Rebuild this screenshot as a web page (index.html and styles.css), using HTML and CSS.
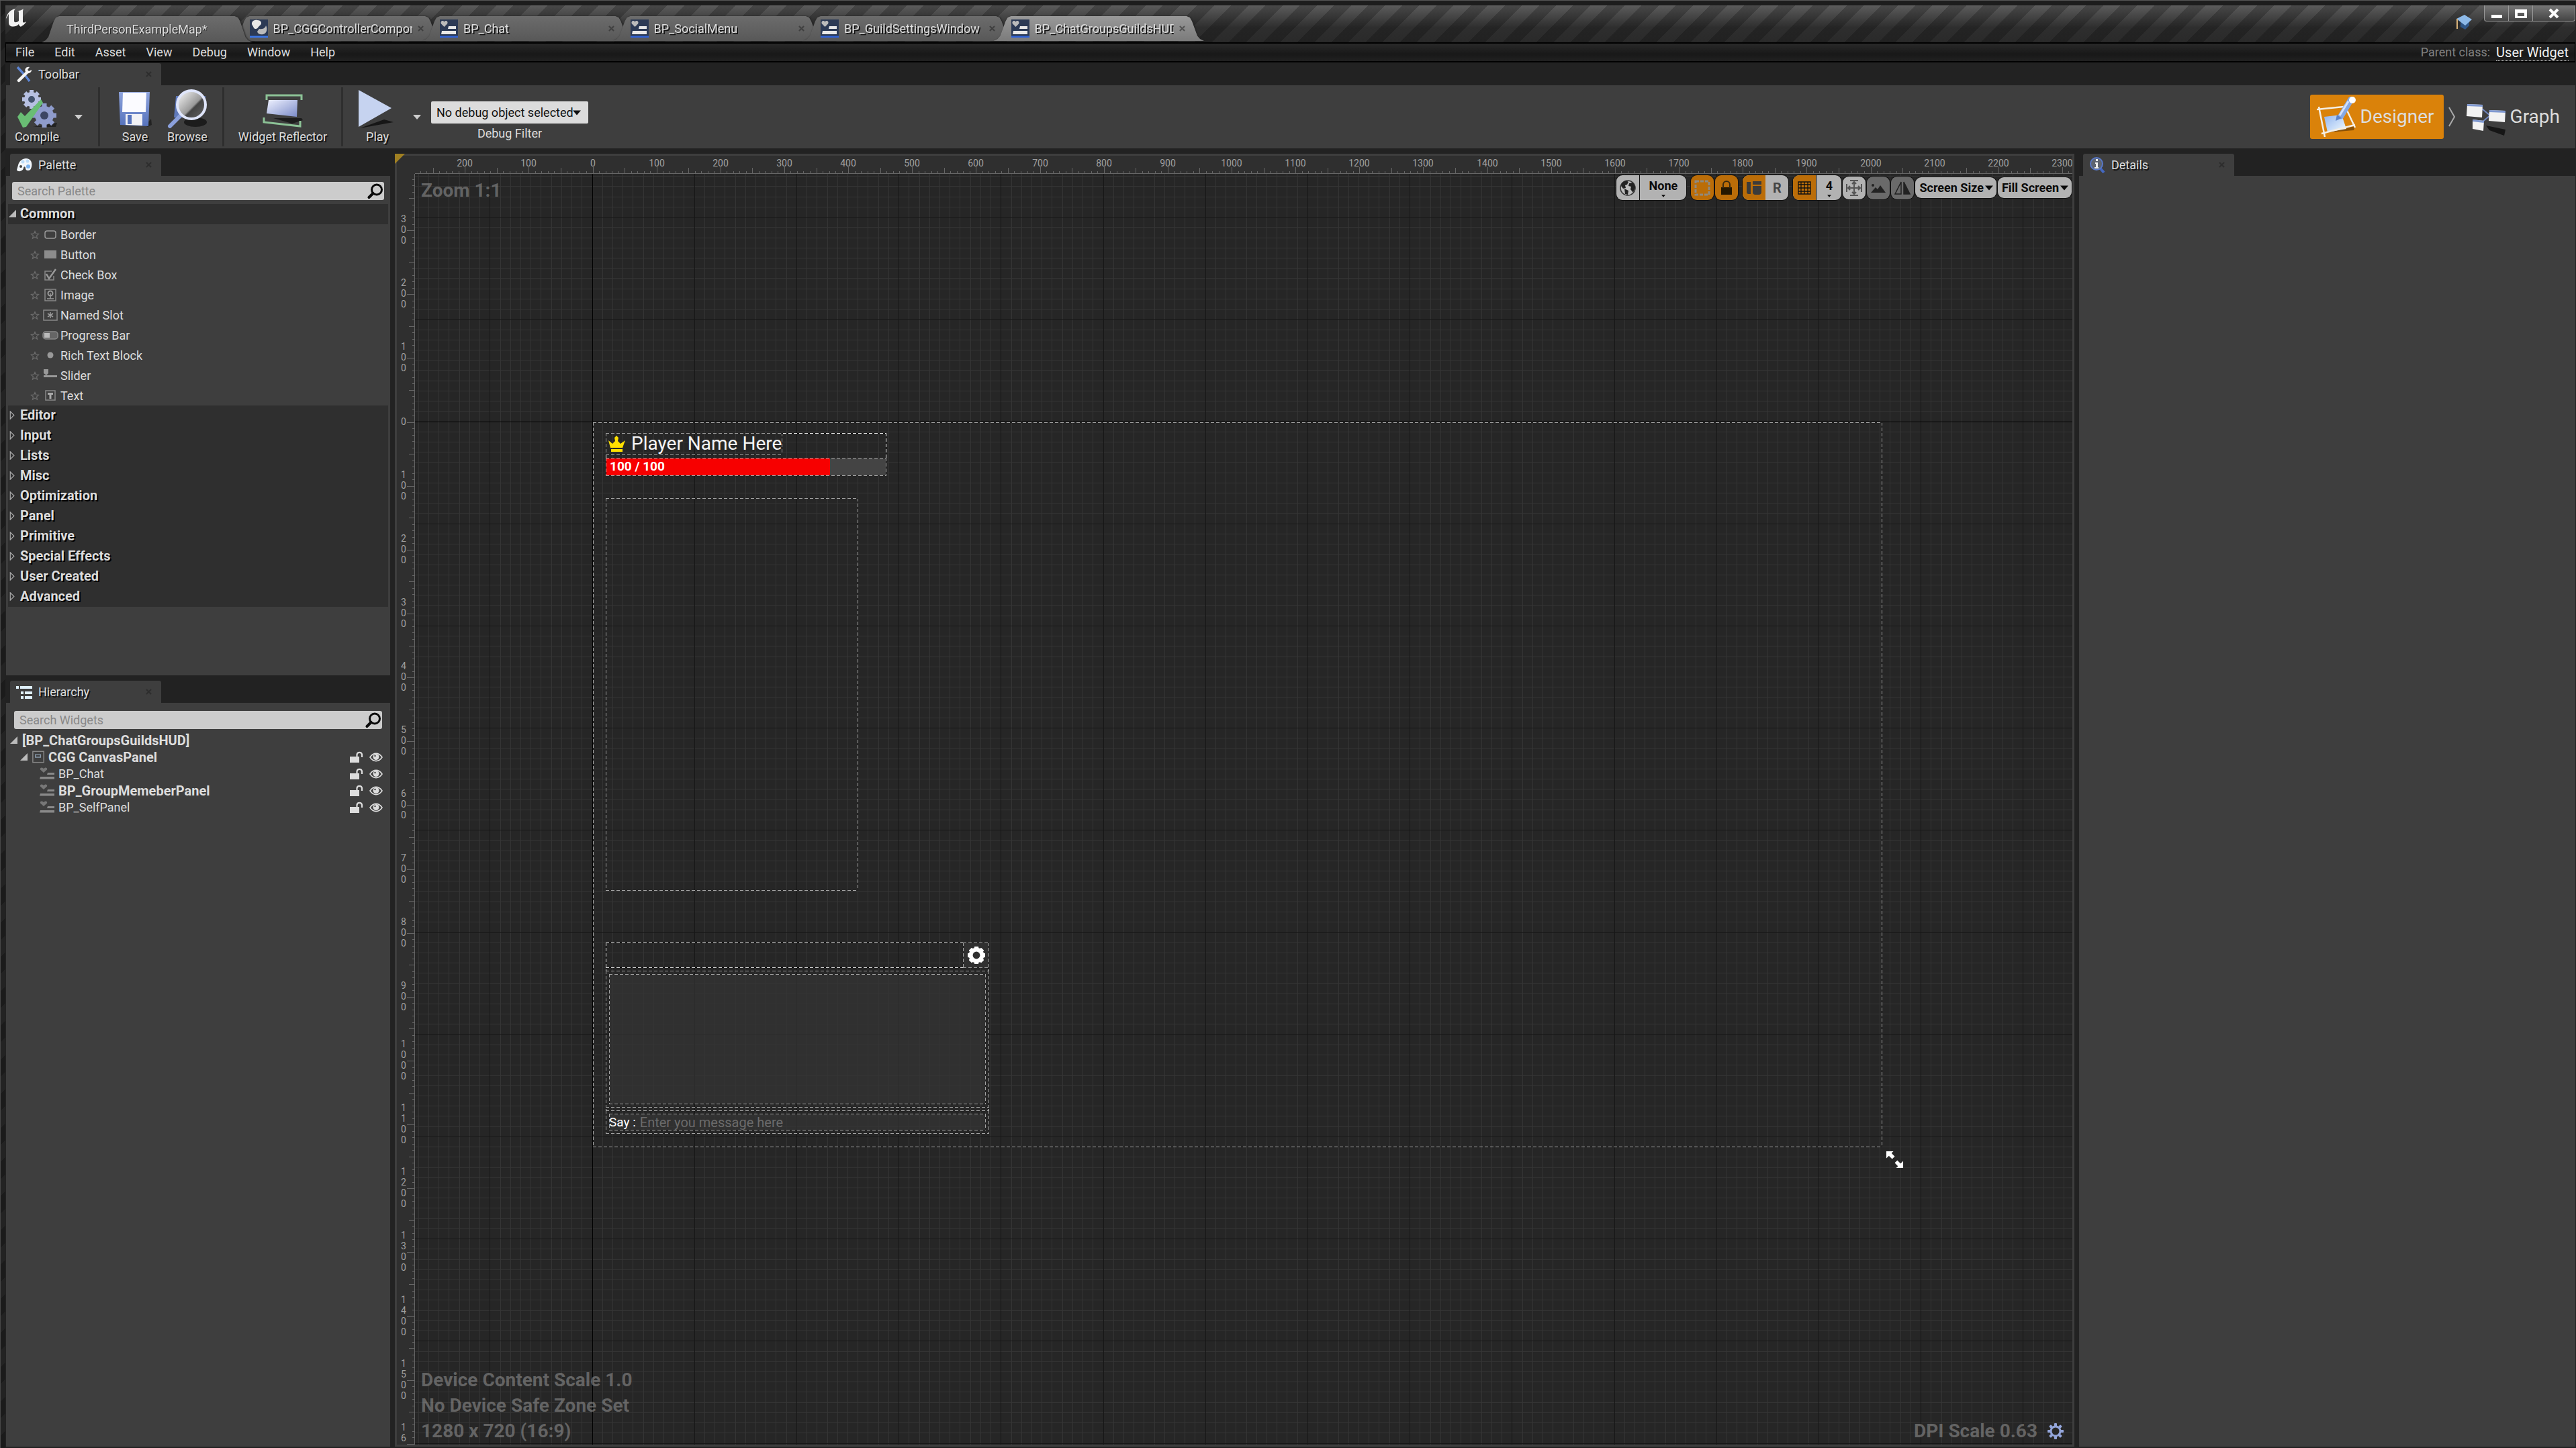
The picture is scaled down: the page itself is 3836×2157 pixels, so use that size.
FILE: index.html
```html
<!DOCTYPE html>
<html lang="en">
<head>
<meta charset="utf-8">
<title>BP_ChatGroupsGuildsHUD</title>
<link rel="stylesheet" href="styles.css">
</head>
<body>
<svg class="defs" aria-hidden="true">
  <defs>
    <linearGradient id="blue" x1="0" y1="0" x2="1" y2="1"><stop offset="0" stop-color="#eef1ff"/><stop offset="1" stop-color="#7b8bc8"/></linearGradient>
    <linearGradient id="steel" x1="0" y1="0" x2="0" y2="1"><stop offset="0" stop-color="#8ea3dc"/><stop offset="1" stop-color="#5673bd"/></linearGradient>
    <linearGradient id="lens" x1="0" y1="0" x2="1" y2="1"><stop offset="0" stop-color="#fff"/><stop offset=".55" stop-color="#999"/><stop offset=".6" stop-color="#444"/><stop offset="1" stop-color="#666"/></linearGradient>
    <linearGradient id="shine" x1="0" y1="0" x2="1" y2="1"><stop offset="0" stop-color="#8fb4f0"/><stop offset="1" stop-color="#f4fcff"/></linearGradient>
  </defs>
  <symbol id="i-widget" viewBox="0 0 27 27"><rect width="27" height="27" fill="#2c3a55"/><path d="M6.500 11 2 6.500C0 3 4 0 6.500 3.500 9 0 13 3 11 6.500z" fill="#bbb"/><path d="M13 10h11v4H12zM3 17h21v5H2z" fill="#e8e8e8"/><path d="M0 24.500h27V27H0z" fill="#2f62d8"/></symbol>
  <symbol id="i-widget-dim" viewBox="0 0 23 19"><path d="M6 8 1 3.500C0 0 4-.5 6 2c2-2.500 6-2 5 1.500z" fill="#777"/><path d="M12 8h10v3H11zM1 14h21v3.500H0z" fill="#8a8a8a"/></symbol>
  <symbol id="i-star" viewBox="0 0 14 14"><path d="M7 1.500 8.600 5.200 12.600 5.500 9.500 8.100 10.500 12.200 7 10 3.500 12.200 4.500 8.100 1.400 5.500 5.400 5.200z" fill="none" stroke="#6c6c6c" stroke-width="1.200"/></symbol>
  <symbol id="i-search" viewBox="0 0 24 24"><circle cx="14" cy="9.500" r="7.500" fill="none" stroke="#0a0a0a" stroke-width="3"/><path d="m8.500 15-6 6" stroke="#0a0a0a" stroke-width="4" stroke-linecap="round"/></symbol>
  <symbol id="i-open" viewBox="0 0 12 12"><path d="M11 0v11H0z" fill="#bbb"/></symbol>
  <symbol id="i-closed" viewBox="0 0 12 14"><path d="M2 1v12l6-6z" fill="none" stroke="#aaa" stroke-width="1.300"/></symbol>
  <symbol id="i-x" viewBox="0 0 10 10"><path d="m1 1 8 8M9 1 1 9" stroke="#1e1e1e" stroke-width="2.400"/></symbol>
  <symbol id="i-lock" viewBox="0 0 20 18"><path d="M0 8h14v9H0z" fill="#ddd"/><path d="M10.500 8V5a3.800 3.800 0 0 1 7.500 0v4" fill="none" stroke="#ddd" stroke-width="2.200"/></symbol>
  <symbol id="i-eye" viewBox="0 0 20 14"><path d="M1 7c5-7.500 13-7.500 18 0-5 7.500-13 7.500-18 0z" fill="none" stroke="#ddd" stroke-width="1.600"/><circle cx="10" cy="6.500" r="4.500" fill="#ddd"/><circle cx="8.500" cy="5" r="1.200" fill="#3e3e3e"/></symbol>
  <symbol id="i-down" viewBox="0 0 12 7"><path d="M0 0h12L6 7z" fill="currentColor"/></symbol>
  <symbol id="i-gear" viewBox="-12 -12 24 24"><g fill="currentColor"><rect x="-2" y="-12" width="4" height="24" rx="1"/><rect x="-2" y="-12" width="4" height="24" rx="1" transform="rotate(45)"/><rect x="-2" y="-12" width="4" height="24" rx="1" transform="rotate(90)"/><rect x="-2" y="-12" width="4" height="24" rx="1" transform="rotate(135)"/><circle r="8.500"/></g><circle r="5.500" fill="#262626"/></symbol>
</svg>

<div class="window">
  <header class="titlebar">
    <svg class="logo" viewBox="0 0 36 30"><path d="M1 16C2 8 8 2 15 1c-2 2-2 3-2 5v13c0 3 4 3 7 0V7c0-3-1-2-3-2 3-1 8-2 10-4-1 2-1 4-1 6v13c0 2 2 2 5 0-2 5-6 6-8 8-1-1-3-2-3-4-4 4-8 4-12 3-2-1-3-3-3-5V9C4 10 3 13 1 16z" fill="#f2f2f2"/></svg>
    <nav class="tabs">
      <a class="tab first" href="#"><span class="tab-label">ThirdPersonExampleMap*</span></a>
      <a class="tab" href="#"><svg class="tab-icon" viewBox="0 0 27 27"><rect width="27" height="27" fill="#2c3a55"/><path d="M4 9c-3-4 1-9 7-8 6 0 8 5 4 8-3 2-3 5-6 5s-3-2-5-5z" fill="#e8e8e8"/><path d="M14 14c7 1 9-2 10-5 3 5 1 12-4 13-4 1-8 0-9-4z" fill="#bbb"/><path d="M0 24.500h27V27H0z" fill="#3b78ee"/></svg><span class="tab-label">BP_CGGControllerComponent</span><svg class="close"><use href="#i-x"/></svg></a>
      <a class="tab" href="#"><svg class="tab-icon"><use href="#i-widget"/></svg><span class="tab-label">BP_Chat</span><svg class="close"><use href="#i-x"/></svg></a>
      <a class="tab" href="#"><svg class="tab-icon"><use href="#i-widget"/></svg><span class="tab-label">BP_SocialMenu</span><svg class="close"><use href="#i-x"/></svg></a>
      <a class="tab" href="#"><svg class="tab-icon"><use href="#i-widget"/></svg><span class="tab-label">BP_GuildSettingsWindow</span><svg class="close"><use href="#i-x"/></svg></a>
      <a class="tab active" href="#"><svg class="tab-icon"><use href="#i-widget"/></svg><span class="tab-label">BP_ChatGroupsGuildsHUD</span><svg class="close"><use href="#i-x"/></svg></a>
    </nav>
    <svg class="cap" viewBox="0 0 26 24"><path d="M7 9v9l7 4 6-6V8z" fill="#2f5687"/><path d="M1 6 13 0l11 7-10 9z" fill="#8db9e8"/><path d="M2 6v15" stroke="#d8b27a" stroke-width="2"/></svg>
    <div class="controls">
      <button aria-label="Minimize"><svg viewBox="0 0 18 16"><path d="M1 10h16v5H1z" fill="#fff"/></svg></button>
      <button aria-label="Maximize"><svg viewBox="0 0 18 16"><path d="M0 2h18v13H0zM4 7v5h10V7z" fill="#fff" fill-rule="evenodd"/></svg></button>
      <button class="wide" aria-label="Close"><svg viewBox="0 0 18 16"><path d="m3 2 12 12M15 2 3 14" stroke="#fff" stroke-width="4"/></svg></button>
    </div>
  </header>

  <nav class="menubar">
    <button>File</button><button>Edit</button><button>Asset</button><button>View</button><button>Debug</button><button>Window</button><button>Help</button>
    <span class="parent">Parent class:</span><a class="class-link" href="#">User Widget</a>
  </nav>

  <section class="dock">
    <div class="dock-tabs"><div class="dock-tab"><svg class="dock-icon" viewBox="0 0 24 24"><path d="m2 1 12 13 6 8" stroke="#5d86d6" stroke-width="3.500" fill="none"/><path d="m4 21 12-12" stroke="#f4f4f4" stroke-width="4.500" stroke-linecap="round"/><path d="M20 1c-5-1-8 3-6 7 3 4 9 2 9-3l-4 2-2-2z" fill="#f4f4f4"/></svg><h2>Toolbar</h2><svg class="close"><use href="#i-x"/></svg></div></div>
    <div class="toolbar">
      <button class="tool compile"><svg viewBox="0 0 60 58"><path d="M24 56 60 50l-2 6z" fill="#222"/><g transform="translate(22 15)" fill="#b7c0e2"><rect x="-3" y="-14" width="6" height="28"/><rect x="-3" y="-14" width="6" height="28" transform="rotate(45)"/><rect x="-3" y="-14" width="6" height="28" transform="rotate(90)"/><rect x="-3" y="-14" width="6" height="28" transform="rotate(135)"/><circle r="11"/><circle r="5" fill="#44536e"/></g><g transform="translate(41 39)" fill="#8f9ccc"><rect x="-3.500" y="-18" width="7" height="36"/><rect x="-3.500" y="-18" width="7" height="36" transform="rotate(45)"/><rect x="-3.500" y="-18" width="7" height="36" transform="rotate(90)"/><rect x="-3.500" y="-18" width="7" height="36" transform="rotate(135)"/><circle r="14"/><circle r="6" fill="#3c4663"/></g><path d="m1 41 5-7 6 6L36 15l3 5-25 36-5 1z" fill="#69bd74"/></svg>Compile</button>
      <button class="drop compile-drop" aria-label="Compile options"><svg><use href="#i-down"/></svg></button>
      <i class="sep"></i>
      <button class="tool save"><svg viewBox="0 0 60 58"><path d="m45 54 9-10 1 9-6 3z" fill="#222"/><path d="M6 4h46l-2 51-42-2z" fill="url(#steel)"/><path d="M12 5h35l-1 29H11z" fill="#fbfbff"/><path d="M16 37h25v17l-25-1z" fill="#f2f2f6"/><path d="M19 38h6v14h-6z" fill="#5673bd"/></svg>Save</button>
      <button class="tool browse"><svg viewBox="0 0 60 58"><ellipse cx="42" cy="49" rx="17" ry="7" fill="#1c1c1c"/><path d="M13 10h44v20L48 42H10z" fill="#5f79bb"/><path d="m4 55 17-17" stroke="#8ba0dc" stroke-width="6" stroke-linecap="round"/><circle cx="36" cy="23" r="21" fill="url(#lens)" stroke="#dfe5fa" stroke-width="4"/></svg>Browse</button>
      <i class="sep"></i>
      <button class="tool reflector"><svg viewBox="0 0 60 58"><path d="M16 43h42l2 3-16 5z" fill="#1c1c1c"/><path d="M9 16h43l-1 25-45-5z" fill="url(#blue)"/><path d="M6 16V9h52v7M2 42v7l54 6v-8" fill="none" stroke="#8cc296" stroke-width="3"/></svg>Widget Reflector</button>
      <i class="sep"></i>
      <button class="tool play"><svg viewBox="0 0 60 58"><path d="m4 58 50-9-14-4z" fill="#161616"/><path d="M2 1v55l49-28z" fill="#c6d3f0"/></svg>Play</button>
      <button class="drop play-drop" aria-label="Play options"><svg><use href="#i-down"/></svg></button>
      <div class="debug">
        <div class="select-box"><select id="debug"><option>No debug object selected</option></select><svg><use href="#i-down"/></svg></div>
        <label for="debug">Debug Filter</label>
      </div>
      <div class="modes">
        <button class="mode on"><svg viewBox="0 0 60 60"><path d="M10 54 58 44 56 50z" fill="#8a5207"/><path d="m12 30 26-3 7 21-28 5z" fill="url(#shine)"/><path d="m1 19 40-4M4 15l9 45M8 55l50-13M42 12l16 34" stroke="#f4eee4" stroke-width="2.500" fill="none"/><path d="m37 29 15-25" stroke="#86a9e4" stroke-width="9" stroke-linecap="round"/><path d="m35 28 13-21" stroke="#d4e2fa" stroke-width="3"/><circle cx="54" cy="5" r="5" fill="#fff"/><path d="m31 27-2 9 9-4z" fill="#5a83cc"/></svg>Designer</button>
        <svg class="chevron" viewBox="0 0 12 30"><path d="m2 1 8 14-8 14" fill="none" stroke="#aaa" stroke-width="2"/></svg>
        <button class="mode"><svg viewBox="0 0 60 60"><path d="m30 43 29 6-2 9-22-8z" fill="#161616"/><path d="m24 18 12 10-12 10" fill="none" stroke="#7188c2" stroke-width="2"/><path d="m2 11 23 1-1 19-23-2zM35 20l24 1-1 17-24-2zM10 34l17 2-1 15-16-3z" fill="#f2f2f2"/><path d="m2 11 23 1v3L2 14zM35 20l24 1v3l-24-1zM10 34l17 2v3l-17-2z" fill="#8099d0"/></svg>Graph</button>
      </div>
    </div>
  </section>

  <main class="workspace">
    <aside class="left">
      <section class="dock palette">
        <div class="dock-tabs"><div class="dock-tab"><svg class="dock-icon" viewBox="0 0 24 24"><path d="M3 12C5 4 13 0 19 3c6 3 5 12 2 16-3 2-7 1-7-2s-2-4-3-1c0 5-9 7-10 3z" fill="#f2f6fb"/><circle cx="18" cy="14" r="3" fill="#79b2ee"/><circle cx="10" cy="7" r="2.500" fill="#bcdcf8"/><circle cx="17" cy="6" r="2.500" fill="#bcdcf8"/><circle cx="7" cy="14" r="2" fill="#444"/></svg><h2>Palette</h2><svg class="close"><use href="#i-x"/></svg></div></div>
        <div class="panel">
          <div class="search"><input type="search" placeholder="Search Palette" aria-label="Search Palette"><svg><use href="#i-search"/></svg></div>
          <div class="tree">
            <button class="category"><svg><use href="#i-open"/></svg>Common</button>
            <ul>
              <li><svg class="star"><use href="#i-star"/></svg><svg class="kind" viewBox="0 0 24 20"><rect x="4" y="4" width="16" height="11" rx="3" fill="none" stroke="#999" stroke-width="1.500"/></svg>Border</li>
              <li><svg class="star"><use href="#i-star"/></svg><svg class="kind" viewBox="0 0 24 20"><rect x="3" y="3" width="18" height="12" fill="#8c8c8c"/></svg>Button</li>
              <li><svg class="star"><use href="#i-star"/></svg><svg class="kind" viewBox="0 0 24 20"><path d="M14 4H4v13h13v-6" fill="none" stroke="#888" stroke-width="1.500"/><path d="m6 8 4 7L20 1" fill="none" stroke="#999" stroke-width="2.500"/></svg>Check Box</li>
              <li><svg class="star"><use href="#i-star"/></svg><svg class="kind" viewBox="0 0 24 20"><rect x="4" y="1" width="16" height="17" fill="none" stroke="#888" stroke-width="1.500"/><path d="M12 7v8M7 15h10" stroke="#999" stroke-width="1.500"/><circle cx="12" cy="7" r="3.500" fill="none" stroke="#999" stroke-width="2"/></svg>Image</li>
              <li><svg class="star"><use href="#i-star"/></svg><svg class="kind" viewBox="0 0 24 20"><rect x="2" y="2" width="20" height="15" fill="none" stroke="#888" stroke-width="1.500"/><path d="M12 5v9M8 7l8 5M16 7l-8 5" stroke="#999" stroke-width="1.500"/></svg>Named Slot</li>
              <li><svg class="star"><use href="#i-star"/></svg><svg class="kind" viewBox="0 0 24 20"><rect x="1" y="4" width="22" height="11" rx="4" fill="#666" stroke="#888" stroke-width="1.500"/><rect x="3" y="6" width="8" height="7" fill="#bbb"/></svg>Progress Bar</li>
              <li><svg class="star"><use href="#i-star"/></svg><svg class="kind" viewBox="0 0 24 20"><circle cx="12" cy="9" r="4.500" fill="#999"/></svg>Rich Text Block</li>
              <li><svg class="star"><use href="#i-star"/></svg><svg class="kind" viewBox="0 0 24 20"><path d="M2 0h7v6L6 9 2 6zM2 9h20v3H2z" fill="#999"/></svg>Slider</li>
              <li><svg class="star"><use href="#i-star"/></svg><svg class="kind" viewBox="0 0 24 20"><rect x="5" y="2" width="14" height="14" fill="none" stroke="#888" stroke-width="1.500"/><path d="M8 5h8v3h-2.500v6h-3V8H8z" fill="#aaa"/></svg>Text</li>
            </ul>
            <button class="category"><svg><use href="#i-closed"/></svg>Editor</button>
            <button class="category"><svg><use href="#i-closed"/></svg>Input</button>
            <button class="category"><svg><use href="#i-closed"/></svg>Lists</button>
            <button class="category"><svg><use href="#i-closed"/></svg>Misc</button>
            <button class="category"><svg><use href="#i-closed"/></svg>Optimization</button>
            <button class="category"><svg><use href="#i-closed"/></svg>Panel</button>
            <button class="category"><svg><use href="#i-closed"/></svg>Primitive</button>
            <button class="category"><svg><use href="#i-closed"/></svg>Special Effects</button>
            <button class="category"><svg><use href="#i-closed"/></svg>User Created</button>
            <button class="category"><svg><use href="#i-closed"/></svg>Advanced</button>
          </div>
        </div>
      </section>
      <section class="dock hierarchy">
        <div class="dock-tabs"><div class="dock-tab"><svg class="dock-icon" viewBox="0 0 24 24"><path d="M0 3h4v4H0zM6 3h18v4H6zM7 11h4v4H7zM13 11h11v4H13zM7 18h4v4H7zM13 18h11v4H13z" fill="#dff0fb"/></svg><h2>Hierarchy</h2><svg class="close"><use href="#i-x"/></svg></div></div>
        <div class="panel">
          <div class="search inset"><input type="search" placeholder="Search Widgets" aria-label="Search Widgets"><svg><use href="#i-search"/></svg></div>
          <ul class="nodes">
            <li class="strong"><svg class="twist"><use href="#i-open"/></svg><span>[BP_ChatGroupsGuildsHUD]</span></li>
            <li class="strong level-1"><svg class="twist"><use href="#i-open"/></svg><svg class="node-icon" viewBox="0 0 24 19"><rect x="3" y="1" width="17" height="17" fill="none" stroke="#888" stroke-width="1.500"/><path d="M7 6h8v4H7z" fill="none" stroke="#89a" stroke-width="1.500"/></svg><span>CGG CanvasPanel</span><svg class="lock"><use href="#i-lock"/></svg><svg class="eye"><use href="#i-eye"/></svg></li>
            <li class="level-2"><svg class="node-icon"><use href="#i-widget-dim"/></svg><span>BP_Chat</span><svg class="lock"><use href="#i-lock"/></svg><svg class="eye"><use href="#i-eye"/></svg></li>
            <li class="strong level-2"><svg class="node-icon"><use href="#i-widget-dim"/></svg><span>BP_GroupMemeberPanel</span><svg class="lock"><use href="#i-lock"/></svg><svg class="eye"><use href="#i-eye"/></svg></li>
            <li class="level-2"><svg class="node-icon"><use href="#i-widget-dim"/></svg><span>BP_SelfPanel</span><svg class="lock"><use href="#i-lock"/></svg><svg class="eye"><use href="#i-eye"/></svg></li>
          </ul>
        </div>
      </section>
    </aside>

    <section class="designer">
      <div class="corner"></div>
      <svg class="ruler ruler-x" id="ruler-x"></svg>
      <svg class="ruler ruler-y" id="ruler-y"></svg>
      <div class="surface">
        <svg class="grid" id="grid"></svg>
        <div class="frame outline dim"></div>
        <div class="self-panel outline">
          <div class="name-row outline dim"><svg viewBox="0 0 27 24"><path d="M4 18 1 7l6 5 4-4-1-5 3-3 3 3-1 5 4 4 7-5-4 11zM5 20h17v4H5z" fill="#ffe000"/></svg><span>Player Name Here</span></div>
          <div class="health outline dim"><span class="health-fill">100 / 100</span></div>
        </div>
        <div class="group-panel outline dim"></div>
        <div class="chat outline">
          <div class="chat-head outline dim"><button class="outline dim" aria-label="Settings"><svg viewBox="-12 -12 24 24"><g fill="#fff"><rect x="-3" y="-12" width="6" height="24" rx="1"/><rect x="-3" y="-12" width="6" height="24" rx="1" transform="rotate(45)"/><rect x="-3" y="-12" width="6" height="24" rx="1" transform="rotate(90)"/><rect x="-3" y="-12" width="6" height="24" rx="1" transform="rotate(135)"/><circle r="10.500"/></g><circle r="5" fill="#303030"/></svg></button></div>
          <div class="chat-log outline dim"><div class="outline dim fill"></div></div>
          <div class="chat-entry outline dim"><div class="outline dim fill"><label for="say">Say :</label><input id="say" placeholder="Enter you message here"></div></div>
        </div>
        <svg class="resize" viewBox="0 0 28 28"><path d="M1 1h11L9 4l5 5-4 4-5-5-4 4zM27 27H16l3-3-5-5 4-4 5 5 4-4z" fill="#fff"/></svg>
        <div class="zoom">Zoom 1:1</div>
        <div class="view-tools">
          <div class="group"><button aria-label="Localization"><svg viewBox="0 0 24 24"><circle cx="12" cy="12" r="11" fill="#bdbdbd" stroke="#333" stroke-width="1.500"/><path d="M3 5c3-4 8-4 10-2l-2 4-3 1 1 4-4 1-3-4zM14 5l6-1 3 7-3 8-4-5 1-4-4-1zM7 13l6 3-1 6-4-1z" fill="#222"/></svg></button><button class="menu none">None<svg><use href="#i-down"/></svg></button></div>
          <div class="group on gap"><button aria-label="Outlines"><svg viewBox="0 0 24 24"><rect x="2" y="2" width="20" height="20" fill="none" stroke="#8f8a80" stroke-width="3" stroke-dasharray="5 2"/></svg></button></div>
          <div class="group on"><button aria-label="Locks"><svg viewBox="0 0 24 24"><path d="M4 11h16v11H4z" fill="#261800"/><path d="M7 12V7a5 5 0 0 1 10 0v5" fill="none" stroke="#3a2a10" stroke-width="2"/></svg></button></div>
          <div class="group gap"><button class="on" aria-label="Flow"><svg viewBox="0 0 24 24"><path d="M1 3h6v18H4q-3 0-3-3zM10 2h13v5H10zM10 9h13v9q0 4-4 4h-5q-4 0-4-4z" fill="#3b3b3b"/></svg></button><button class="letter">R</button></div>
          <div class="group gap"><button class="on" aria-label="Grid snapping"><svg viewBox="0 0 24 24"><path d="M3 3h18v18H3zM7 3v18M12 3v18M17 3v18M3 7h18M3 12h18M3 17h18" fill="none" stroke="#111" stroke-width="1.300"/></svg></button><button class="menu">4<svg><use href="#i-down"/></svg></button></div>
          <div class="group small"><button aria-label="Zoom to fit"><svg viewBox="0 0 24 24"><path d="M6 1h12M6 23h12M1 6v12M23 6v12M12 3v18M3 12h18M9 6l3-3 3 3M9 18l3 3 3-3M6 9l-3 3 3 3M18 9l3 3-3 3" fill="none" stroke="#555" stroke-width="2"/></svg></button></div>
          <div class="group small off"><button aria-label="Preview background"><svg viewBox="0 0 24 24"><path d="m1 19 7-8 3 3 4-6 8 11z" fill="#222"/><circle cx="4" cy="8" r="2" fill="#222"/></svg></button></div>
          <div class="group small off"><button aria-label="Mirror"><svg viewBox="0 0 24 24"><path d="M10 3v18H1zM14 3v18h9z" fill="none" stroke="#222" stroke-width="1.500"/><path d="M14 3v18h9z" fill="#222"/></svg></button></div>
          <button class="size">Screen Size<svg><use href="#i-down"/></svg></button>
          <button class="size">Fill Screen<svg><use href="#i-down"/></svg></button>
        </div>
        <div class="status">
          <p>Device Content Scale 1.0<br>No Device Safe Zone Set<br>1280 x 720 (16:9)</p>
          <p class="dpi">DPI Scale 0.63<svg><use href="#i-gear"/></svg></p>
        </div>
      </div>
    </section>

    <section class="dock details">
      <div class="dock-tabs"><div class="dock-tab"><svg class="dock-icon" viewBox="0 0 24 24"><path d="m16 16 6 7" stroke="#4468c0" stroke-width="4"/><circle cx="11" cy="10" r="9" fill="#5e6470" stroke="#5878c8" stroke-width="2"/><path d="M9 8h4v7h1v2H8v-2h2v-5H9zM10 3h3v3h-3z" fill="#eee"/></svg><h2>Details</h2><svg class="close"><use href="#i-x"/></svg></div></div>
      <div class="panel"></div>
    </section>
  </main>
</div>
<script src="rulers.js"></script>
</body>
</html>
```
FILE: styles.css
```css
* { box-sizing: border-box; }
body { margin: 0; background: #222; color: #ddd; font: 18px/24px Roboto, sans-serif; }
button, input, select { font: inherit; color: inherit; background: none; border: 0; padding: 0; margin: 0; }
input { min-width: 0; outline: 0; }
a { color: inherit; text-decoration: none; }
h2, p, ul { margin: 0; padding: 0; font: inherit; list-style: none; }
svg { display: block; flex: none; }
.defs { position: absolute; width: 0; height: 0; }

.window { display: flex; flex-direction: column; height: 100vh; padding: 0 1px 2px 9px; border-top: 1px solid #565656;
  background: linear-gradient(90deg, #484848 0 1px, transparent 1px), linear-gradient(90deg, transparent 8px, #222 8px), repeating-linear-gradient(135deg, #1b1b1b 0 18px, #232323 18px 36px); }

/* title bar */
.titlebar { display: flex; align-items: flex-end; height: 62px; margin-left: -1px;
  background: linear-gradient(#1d1d1d 0 7px, transparent 7px), repeating-linear-gradient(135deg, rgba(0,0,0,.22) 0 18px, transparent 18px 36px), linear-gradient(#5c5c5c 7px, #2e2e2e 40px, #2a2a2a); }
.logo { width: 36px; height: 30px; margin: 0 18px 21px 0; }
.tabs { display: flex; width: 1731px; }
.tab { position: relative; display: flex; flex: 1 1 0; min-width: 0; align-items: center; height: 37px; margin-right: -30px; padding: 0 26px; z-index: 1; filter: drop-shadow(1px 0 1px #222); text-shadow: 2px 2px 0 #111; }
.tab:last-child { margin-right: 0; }
.tab::before { content: ""; position: absolute; inset: 0; z-index: -1; background: linear-gradient(#6c6c6c, #585858);
  clip-path: polygon(0 100%, 6px 92%, 10px 80%, 18px 20%, 21px 6%, 26px 0, calc(100% - 26px) 0, calc(100% - 21px) 6%, calc(100% - 18px) 20%, calc(100% - 10px) 80%, calc(100% - 6px) 92%, 100% 100%); }
.tab.first { height: 39px; z-index: 2; text-shadow: 1px 1px 0 #222; }
.tab.active { z-index: 3; }
.tab.active::before { background: linear-gradient(#999, #7b7b7b); }
.tab-icon { width: 27px; height: 27px; }
.tab-label { flex: 1; margin: 0 8px; overflow: hidden; white-space: nowrap; }
.tab.first .tab-label { margin: 0 0 0 11px; overflow: visible; }
.close { width: 9px; height: 9px; opacity: .5; }
.tab .close { margin-right: 2px; }
.cap { width: 26px; height: 24px; margin: 0 16px 17px auto; }
.controls { display: flex; align-self: flex-start; margin: 7px 0 0; border: 1px solid #999; border-top: 0; border-radius: 0 0 4px 4px; background: linear-gradient(#777, #444); }
.controls button { display: flex; align-items: center; justify-content: center; width: 36px; height: 23px; border-right: 1px solid #999; }
.controls button.wide { width: 62px; border: 0; }
.controls svg { width: 18px; height: 16px; }

/* menu bar */
.menubar { display: flex; align-items: center; height: 30px; margin-left: -1px; padding: 0 9px 0 0; border: 1px solid #000; border-width: 2px 1px; background: linear-gradient(#292929, #181818 60%, #212121); }
.menubar button { margin-left: 14px; margin-right: 16px; }
.parent { margin-left: auto; color: #808080; }
.class-link { margin-left: 9px; font-size: 20px; line-height: 24px; color: #eee; border-bottom: 1px dotted #ccc; }

/* docked panels */
.dock { display: flex; flex-direction: column; }
.dock-tabs { display: flex; padding-left: 6px; }
.dock-tab { display: flex; align-items: center; width: 225px; height: 33px; padding: 0 14px 0 9px; background: #3e3e3e; border-radius: 3px 3px 0 0; }
.dock-tab h2 { flex: 1; margin-left: 9px; text-shadow: 2px 2px 0 #111; }
.dock-icon { width: 24px; height: 24px; }
.panel { flex: 1; background: #3e3e3e; }

/* toolbar */
.toolbar { display: flex; align-items: center; height: 94px; background: #3e3e3e; }
.window > .dock { margin-top: 1px; }
.tool { display: flex; flex-direction: column; align-items: center; gap: 1px; width: 76px; white-space: nowrap; text-shadow: 2px 2px 0 #111; }
.tool svg { width: 60px; height: 58px; }
.compile { width: 92px; }
.save, .browse { width: 78px; }
.reflector { width: 148px; }
.drop { display: flex; justify-content: center; width: 32px; color: #ccc; }
.play-drop { width: 42px; }
.drop svg { width: 12px; height: 7px; }
.sep { width: 3px; height: 88px; margin: 0 13px; background: #2e2e2e; }
.debug { display: flex; flex-direction: column; align-items: center; gap: 3px; padding-top: 14px; }
.select-box { display: grid; width: 234px; height: 33px; background: #dcdcdc; border-radius: 2px; color: #111; align-items: center; }
.select-box > * { grid-area: 1 / 1; }
.select-box select { width: 100%; height: 33px; padding: 0 8px; appearance: none; outline: 0; }
.select-box svg { width: 12px; height: 8px; justify-self: end; margin-right: 11px; pointer-events: none; }
.modes { display: flex; align-items: center; margin-left: auto; }
.mode { display: flex; align-items: center; height: 66px; padding: 0 14px 0 9px; gap: 6px; font-size: 28px; line-height: 36px; }
.mode.on { background: #da820a; border-radius: 3px; }
.mode svg { width: 60px; height: 60px; }
.mode:last-child { padding-right: 23px; padding-left: 15px; }
.chevron { width: 12px; height: 30px; margin-left: 6px; }

/* workspace */
.workspace { flex: 1; min-height: 0; display: grid; grid-template-columns: 572px minmax(0, 1fr) 739px; column-gap: 7px; margin-top: 8px; }
.left { display: flex; flex-direction: column; gap: 8px; min-height: 0; }
.palette { height: 777px; }
.hierarchy { flex: 1; }
.search { display: flex; align-items: center; height: 27px; margin: 9px; padding: 0 1px 0 8px; background: #ccc; border-radius: 3px; color: #222; }
.search input { flex: 1; }
.search ::placeholder { color: #888; opacity: 1; }
.search svg { width: 24px; height: 24px; }
.search.inset { margin: 12px 12px 4px; }
.tree { margin: -3px 3px 0; }
.category { display: flex; align-items: center; width: 100%; height: 30px; padding: 0 0 2px 1px; gap: 5px; background: #2f2f2f; font-size: 20px; font-weight: 700; text-shadow: 2px 2px 0 #000; }
.category svg { width: 12px; height: 13px; }
.tree li { display: flex; align-items: center; height: 30px; padding: 2px 0 0 33px; }
.star { width: 14px; height: 14px; }
.kind { width: 24px; height: 20px; margin: 0 3px 0 4px; }
.nodes li { display: flex; align-items: center; height: 25px; padding: 0 11px 0 6px; gap: 5px; }
.nodes span { flex: 1; }
.nodes .strong { font-size: 20px; font-weight: 700; }
.nodes .level-1 { padding-left: 21px; gap: 3px; }
.nodes .level-2 { padding-left: 50px; }
.twist { width: 12px; height: 12px; margin-right: 1px; }
.node-icon { width: 23px; height: 19px; }
.lock { width: 20px; height: 18px; margin-right: 4px; }
.level-1 .lock { margin-right: 6px; }
.eye { width: 20px; height: 14px; }

/* designer */
.designer { display: grid; grid-template: 27px minmax(0, 1fr) / 27px minmax(0, 1fr); padding: 3px; overflow: hidden; position: relative; background: #3e3e3e; }
.corner { background: #2f2f2f; }
.corner::before { content: ""; position: absolute; left: 0; top: 0; width: 15px; height: 15px; background: #a08022; clip-path: polygon(0 0, 100% 0, 0 100%); }
.ruler { width: 100%; height: 100%; background: #2f2f2f; }
.ruler path { fill: #666; }
.ruler text { fill: #a0a0a0; font-size: 14px; text-anchor: middle; }
.surface { position: relative; overflow: hidden; background: #262626; }
.grid { position: absolute; width: 100%; height: 100%; }
.minor { fill: #353535; }
.major { fill: #161616; }
.origin { fill: #000; }
.outline { --ink: #f4f4f4; --gap: #000;
  background: repeating-linear-gradient(90deg, var(--ink) 0 5px, var(--gap) 5px 8px) top / 100% 1px no-repeat,
    repeating-linear-gradient(90deg, var(--ink) 0 5px, var(--gap) 5px 8px) bottom / 100% 1px no-repeat,
    repeating-linear-gradient(var(--ink) 0 5px, var(--gap) 5px 8px) left / 1px 100% no-repeat,
    repeating-linear-gradient(var(--ink) 0 5px, var(--gap) 5px 8px) right / 1px 100% no-repeat; }
.outline.dim { --ink: #a2a2a2; --gap: #222; }
.outline.fill { background-color: rgba(52,52,52,.7); }
.frame { position: absolute; left: 265px; top: 370px; width: 1920px; height: 1080px; }
.self-panel { position: absolute; left: 284px; top: 386px; width: 418px; display: grid; gap: 4px; }
.name-row { display: flex; align-items: center; justify-self: start; height: 33px; padding: 0 1px 2px 3px; gap: 8px; font-size: 28px; color: #f4f4f4; }
.name-row svg { width: 27px; height: 24px; }
.health { display: flex; height: 27px; padding: 1px; background-color: #444; color: #fff; font-size: 19px; font-weight: 700; }
.health-fill { width: 80%; padding-left: 5px; background: #f70000; }
.group-panel { position: absolute; left: 284px; top: 483px; width: 376px; height: 585px; }
.chat { position: absolute; left: 284px; top: 1145px; width: 571px; display: grid; grid-template-rows: 38px 204px 35px; row-gap: 4px; }
.chat .chat-head { --ink: #e4e4e4; --gap: #000; display: flex; justify-content: flex-end; }
.chat-head button { display: flex; align-items: center; justify-content: center; width: 39px; background-color: #303030; }
.chat-head svg { width: 26px; height: 26px; }
.chat-log, .chat-entry { display: flex; padding: 5px; }
.chat-log .fill { flex: 1; }
.chat-entry .fill { flex: 1; display: flex; align-items: center; gap: 6px; color: #fff; font-size: 19px; line-height: 22px; }
.chat-entry input { flex: 1; font-size: 20px; }
.chat-entry ::placeholder { color: #6b6b6b; opacity: 1; }
.resize { position: absolute; left: 2190px; top: 1455px; width: 27px; height: 27px; }
.zoom, .status { color: rgba(160,160,160,.5); font-size: 28px; line-height: 38px; font-weight: 700; }
.zoom { position: absolute; left: 9px; top: 6px; }
.status { position: absolute; left: 9px; right: 13px; bottom: 1px; display: flex; align-items: flex-end; justify-content: space-between; }
.dpi { display: flex; align-items: center; gap: 15px; }
.dpi svg { width: 24px; height: 24px; color: #93a5da; }

.view-tools { position: absolute; right: 1px; top: 2px; display: flex; align-items: center; gap: 2px; color: #0a0a0a; font-weight: 700; }
.group { display: flex; height: 37px; background: #b2b2b2; border-radius: 9px; overflow: hidden; box-shadow: 0 0 0 1px #111; }
.group.gap { margin-left: 5px; }
.group button { display: flex; flex-direction: column; align-items: center; justify-content: center; width: 34px; border-left: 1px solid #111; }
.group button:first-child { border-left: 0; }
.group svg { width: 24px; height: 24px; }
.group .menu { width: 38px; line-height: 22px; gap: 2px; }
.group .none { width: 70px; }
.group .menu svg { width: 6px; height: 4px; }
.group.on, .group .on { background: #bb6d08; }
.letter { color: #444; font-size: 20px; }
.group .letter { border: 0; }
.small { height: 34px; }
.off { background: #6a6a6a; }
.size { display: flex; align-items: center; gap: 2px; height: 31px; padding: 0 5px 0 6px; border-radius: 9px; background: #b2b2b2; box-shadow: 0 0 0 1px #111; }
.size svg { width: 12px; height: 8px; }
```
FILE: rulers.js
```js
// Draws the grid and both rulers, snapped to whole pixels.
const UNIT = 95.15;   // pixels for 100 ruler units
const GRID = 15.22;   // pixels for one grid cell
const ZERO = { x: 265, y: 370 };
const NS = 'http://www.w3.org/2000/svg';

function add(svg, name, attrs, text) {
  const el = document.createElementNS(NS, name);
  for (const key in attrs) el.setAttribute(key, attrs[key]);
  if (text !== undefined) el.textContent = text;
  svg.append(el);
  return el;
}

function drawGrid() {
  const svg = document.getElementById('grid');
  const { width, height } = svg.getBoundingClientRect();
  const paths = { minor: '', major: '', origin: '' };
  const kind = i => (i === 0 ? 'origin' : i % 10 === 0 ? 'major' : 'minor');
  for (let i = -40; i < 200; i++) {
    const x = Math.floor(ZERO.x - 1 + i * GRID);
    const y = Math.floor(ZERO.y - 1 + i * GRID);
    if (x >= 0 && x < width) paths[kind(i)] += `M${x} 0h1v${height}h-1z`;
    if (y >= 0 && y < height) paths[kind(i)] += `M0 ${y}h${width}v1H0z`;
  }
  svg.replaceChildren();
  for (const name in paths) add(svg, 'path', { class: name, d: paths[name] });
}

function drawRulers() {
  const top = document.getElementById('ruler-x');
  const side = document.getElementById('ruler-y');
  const width = top.getBoundingClientRect().width;
  const height = side.getBoundingClientRect().height;
  let dx = `M0 26h${width}v1H0z`;
  let dy = `M26 0h1v${height}h-1z`;
  top.replaceChildren();
  side.replaceChildren();
  for (let i = -40; i < 400; i++) {
    const x = Math.floor(ZERO.x + i * UNIT / 10);
    const y = Math.floor(ZERO.y + i * UNIT / 10);
    const size = i % 10 === 0 ? 11 : i % 5 === 0 ? 8 : 3;
    if (x >= 0 && x < width) dx += `M${x} ${26 - Math.min(size, 9)}h1V26h-1z`;
    if (y >= 0 && y < height) dy += `M${26 - size} ${y}H26v1h-${size}z`;
    if (i % 10 !== 0) continue;
    const label = String(Math.abs(i * 10));
    if (x >= 0 && x < width + 10) add(top, 'text', { x, y: 16 }, label);
    if (y >= 0 && y < height + 20) {
      const text = add(side, 'text', {});
      const first = y + 4 - (label.length - 1) * 8;
      [...label].forEach((digit, n) => add(text, 'tspan', { x: 10, y: first + n * 16 }, digit));
    }
  }
  add(top, 'path', { d: dx });
  add(side, 'path', { d: dy });
}

function draw() {
  drawGrid();
  drawRulers();
}

draw();
window.addEventListener('resize', draw);
```
